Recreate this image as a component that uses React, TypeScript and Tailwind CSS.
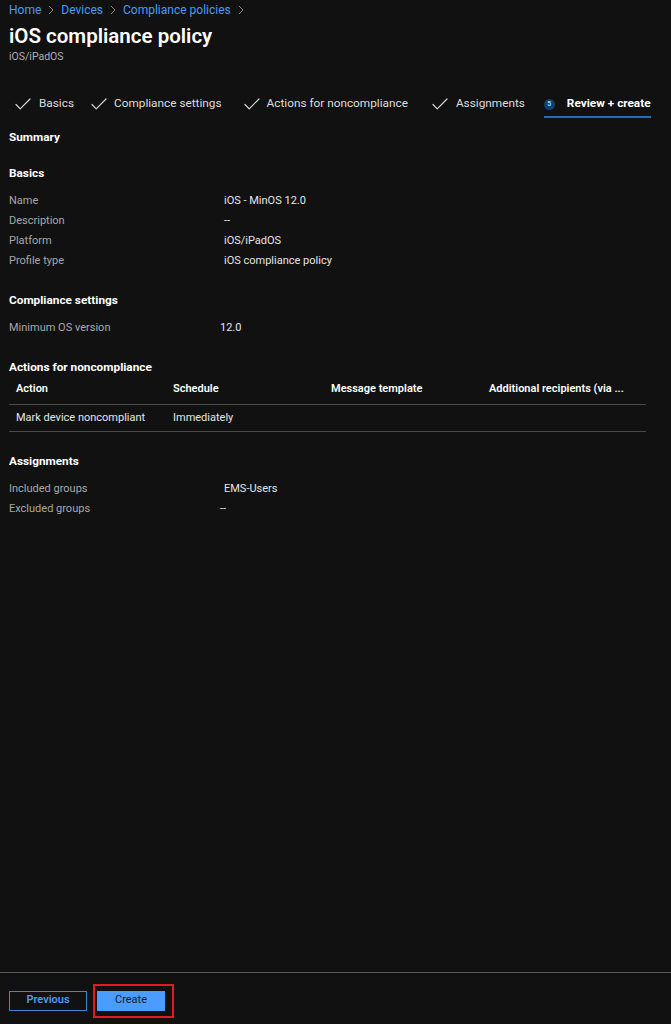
import React from "react";

const Check = () => (
  <svg width="16" height="14" viewBox="0 0 16 14" fill="none" className="shrink-0">
    <path d="M1 7.5 L5.2 11.8 L15 2" stroke="#d6d6d6" strokeWidth="1.2" strokeLinecap="round" strokeLinejoin="round" />
  </svg>
);

const Chevron = () => (
  <svg width="8" height="10" viewBox="0 0 8 10" fill="none" className="mx-[6px]">
    <path d="M2 1 L6 5 L2 9" stroke="#8a8a8a" strokeWidth="1" />
  </svg>
);

const Row = ({ label, value, shift = false }: { label: string; value: string; shift?: boolean }) => (
  <div className="flex h-[20px] items-center whitespace-nowrap">
    <div className={shift ? "w-[211px] text-[#a8a8a8]" : "w-[215px] text-[#a8a8a8]"}>{label}</div>
    <div className="text-[#e6e6e6]">{value}</div>
  </div>
);

const Heading = ({ children, mt }: { children: React.ReactNode; mt: string }) => (
  <div className={`${mt} h-[16px] text-[11.8px] font-bold leading-[16px] text-white`}>{children}</div>
);

export default function App() {
  return (
    <div
      className="flex min-h-[1024px] w-[671px] flex-col bg-[#111111] text-[11px] text-[#e6e6e6]"
      style={{ fontFamily: 'Roboto, "Liberation Sans", sans-serif' }}
    >
      <div className="flex-1 px-[9px]">
        <div className="flex h-[20px] items-center whitespace-nowrap text-[12px] text-[#4c9bf5]">
          <span>Home</span>
          <Chevron />
          <span>Devices</span>
          <Chevron />
          <span>Compliance policies</span>
          <Chevron />
        </div>
        <div className="mt-[2px] h-[28px] text-[20.5px] font-semibold leading-[28px] text-white">iOS compliance policy</div>
        <div className="h-[14px] text-[10.5px] leading-[14px] text-[#b0b0b0]">iOS/iPadOS</div>

        <div className="mt-[29px] flex h-[25px] items-start whitespace-nowrap text-[11.8px] text-[#dedede]">
          <div className="ml-[6px] flex h-[22px] items-center gap-[8px]"><Check /><span>Basics</span></div>
          <div className="ml-[17px] flex h-[22px] items-center gap-[7px]"><Check /><span>Compliance settings</span></div>
          <div className="ml-[22px] flex h-[22px] items-center gap-[7px]"><Check /><span>Actions for noncompliance</span></div>
          <div className="ml-[24px] flex h-[22px] items-center gap-[8px]"><Check /><span>Assignments</span></div>
          <div className="ml-[19px] flex h-[25px] flex-col">
            <div className="flex h-[22px] items-center gap-[12px]">
              <span className="flex h-[11px] w-[11px] items-center justify-center rounded-full bg-[#0f3f73] text-[7px] font-bold text-[#a9cdf5]">5</span>
              <span className="font-bold text-white">Review + create</span>
            </div>
            <div className="mt-[1px] h-[2px] bg-[#1a70c4]" />
          </div>
        </div>

        <Heading mt="mt-[11px]">Summary</Heading>

        <Heading mt="mt-[20px]">Basics</Heading>
        <div className="mt-[10px]">
          <Row label="Name" value="iOS - MinOS 12.0" />
          <Row label="Description" value="--" />
          <Row label="Platform" value="iOS/iPadOS" />
          <Row label="Profile type" value="iOS compliance policy" />
        </div>

        <Heading mt="mt-[21px]">Compliance settings</Heading>
        <div className="mt-[10px]">
          <Row label="Minimum OS version" value="12.0" shift />
        </div>

        <Heading mt="mt-[21px]">Actions for noncompliance</Heading>
        <div className="w-[637px] whitespace-nowrap">
          <div className="grid h-[30px] grid-cols-[157px_158px_158px_1fr] items-center border-b border-[#4a4a4a] pl-[7px] font-semibold text-white">
            <div>Action</div>
            <div>Schedule</div>
            <div>Message template</div>
            <div>Additional recipients (via ...</div>
          </div>
          <div className="grid h-[27px] grid-cols-[157px_158px_158px_1fr] items-center border-b border-[#4a4a4a] pl-[7px] text-[#e6e6e6]">
            <div>Mark device noncompliant</div>
            <div>Immediately</div>
            <div />
            <div />
          </div>
        </div>

        <Heading mt="mt-[21px]">Assignments</Heading>
        <div className="mt-[10px]">
          <Row label="Included groups" value="EMS-Users" />
          <Row label="Excluded groups" value="--" shift />
        </div>
      </div>

      <div className="flex h-[52px] items-center border-t border-[#5a5a5a] px-[9px] pt-[4px]">
        <button className="flex h-[20px] w-[78px] items-center justify-center border border-[#3e86d6] text-[11px] font-semibold text-[#4c9bf5]">
          Previous
        </button>
        <div className="ml-[6px] flex border-2 border-[#e01b24] py-[5px] pl-[2px] pr-[7px]">
          <button className="flex h-[20px] w-[68px] items-center justify-center bg-[#4a9dff] text-[11px] text-[#1a1a1a]">
            Create
          </button>
        </div>
      </div>
    </div>
  );
}
